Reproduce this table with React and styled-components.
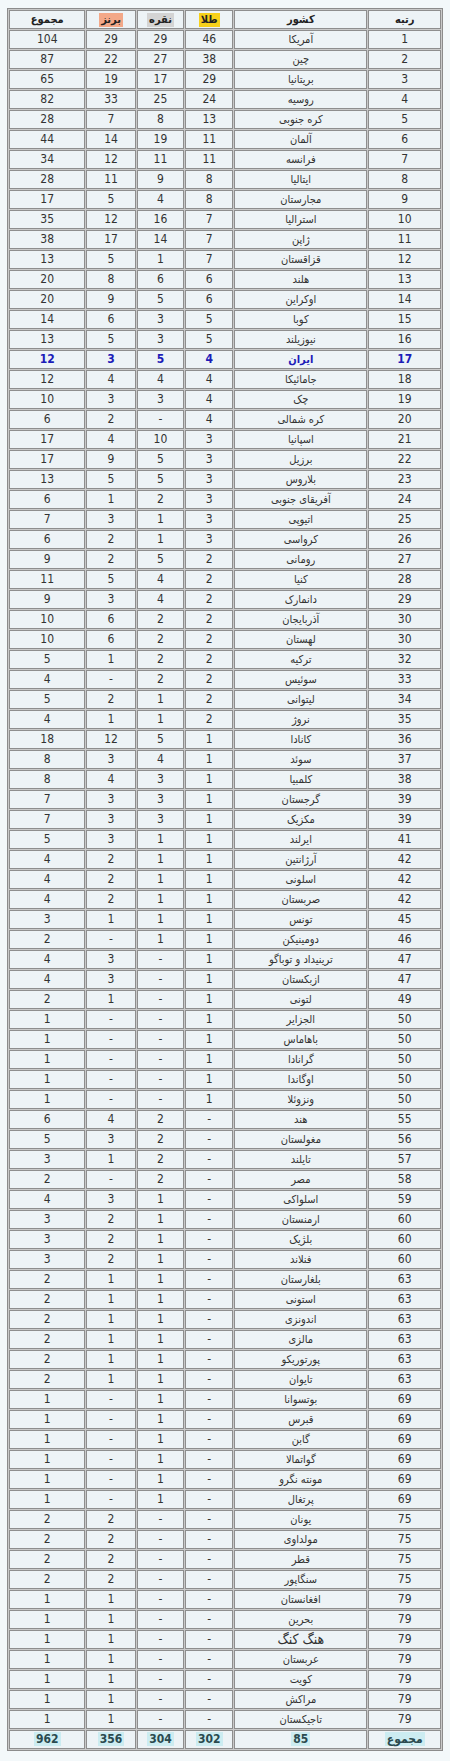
import React from 'react';
import styled, { createGlobalStyle } from 'styled-components';

const GlobalStyle = createGlobalStyle`
  html, body {
    margin: 0;
    padding: 0;
    background: #f3f8fa;
  }
  body {
    font-family: 'DejaVu Sans Condensed', 'DejaVu Sans', sans-serif;
  }
`;

const Page = styled.div`
  width: 450px;
  padding: 8px 7px 10px 7px;
  box-sizing: border-box;
`;

const Table = styled.table`
  direction: rtl;
  width: 436px;
  table-layout: fixed;
  border-collapse: separate;
  border-spacing: 1px;
  border: 1px solid #8c8c8c;
  background: #c9c9c9;
`;

const Cell = styled.td`
  box-sizing: border-box;
  height: 19px;
  padding: 0;
  border: 1px solid #8e8e8e;
  background: #edf3f6;
  text-align: center;
  vertical-align: middle;
  line-height: 17px;
  font-size: ${(props) => (props.large ? '14px' : props.name ? '11px' : '12px')};
  font-weight: ${(props) => (props.bold ? 'bold' : 'normal')};
  color: ${(props) => props.color || '#333333'};
  white-space: nowrap;
  overflow: hidden;
`;

const HeadCell = styled(Cell).attrs({ as: 'th' })`
  font-size: 11px;
  font-weight: bold;
  color: #222222;
`;

const Mark = styled.span`
  display: inline-block;
  padding: 0 2px;
  line-height: 14px;
  background: ${(props) => props.bg};
`;

const medals = [
  [1, 'آمریکا', 46, 29, 29, 104],
  [2, 'چین', 38, 27, 22, 87],
  [3, 'بریتانیا', 29, 17, 19, 65],
  [4, 'روسیه', 24, 25, 33, 82],
  [5, 'کره جنوبی', 13, 8, 7, 28],
  [6, 'آلمان', 11, 19, 14, 44],
  [7, 'فرانسه', 11, 11, 12, 34],
  [8, 'ایتالیا', 8, 9, 11, 28],
  [9, 'مجارستان', 8, 4, 5, 17],
  [10, 'استرالیا', 7, 16, 12, 35],
  [11, 'ژاپن', 7, 14, 17, 38],
  [12, 'قزاقستان', 7, 1, 5, 13],
  [13, 'هلند', 6, 6, 8, 20],
  [14, 'اوکراین', 6, 5, 9, 20],
  [15, 'کوبا', 5, 3, 6, 14],
  [16, 'نیوزیلند', 5, 3, 5, 13],
  [17, 'ایران', 4, 5, 3, 12],
  [18, 'جامائیکا', 4, 4, 4, 12],
  [19, 'چک', 4, 3, 3, 10],
  [20, 'کره شمالی', 4, '-', 2, 6],
  [21, 'اسپانیا', 3, 10, 4, 17],
  [22, 'برزیل', 3, 5, 9, 17],
  [23, 'بلاروس', 3, 5, 5, 13],
  [24, 'آفریقای جنوبی', 3, 2, 1, 6],
  [25, 'اتیوپی', 3, 1, 3, 7],
  [26, 'کرواسی', 3, 1, 2, 6],
  [27, 'رومانی', 2, 5, 2, 9],
  [28, 'کنیا', 2, 4, 5, 11],
  [29, 'دانمارک', 2, 4, 3, 9],
  [30, 'آذربایجان', 2, 2, 6, 10],
  [30, 'لهستان', 2, 2, 6, 10],
  [32, 'ترکیه', 2, 2, 1, 5],
  [33, 'سوئیس', 2, 2, '-', 4],
  [34, 'لیتوانی', 2, 1, 2, 5],
  [35, 'نروژ', 2, 1, 1, 4],
  [36, 'کانادا', 1, 5, 12, 18],
  [37, 'سوئد', 1, 4, 3, 8],
  [38, 'کلمبیا', 1, 3, 4, 8],
  [39, 'گرجستان', 1, 3, 3, 7],
  [39, 'مکزیک', 1, 3, 3, 7],
  [41, 'ایرلند', 1, 1, 3, 5],
  [42, 'آرژانتین', 1, 1, 2, 4],
  [42, 'اسلونی', 1, 1, 2, 4],
  [42, 'صربستان', 1, 1, 2, 4],
  [45, 'تونس', 1, 1, 1, 3],
  [46, 'دومینیکن', 1, 1, '-', 2],
  [47, 'ترینیداد و توباگو', 1, '-', 3, 4],
  [47, 'ازبکستان', 1, '-', 3, 4],
  [49, 'لتونی', 1, '-', 1, 2],
  [50, 'الجزایر', 1, '-', '-', 1],
  [50, 'باهاماس', 1, '-', '-', 1],
  [50, 'گرانادا', 1, '-', '-', 1],
  [50, 'اوگاندا', 1, '-', '-', 1],
  [50, 'ونزوئلا', 1, '-', '-', 1],
  [55, 'هند', '-', 2, 4, 6],
  [56, 'مغولستان', '-', 2, 3, 5],
  [57, 'تایلند', '-', 2, 1, 3],
  [58, 'مصر', '-', 2, '-', 2],
  [59, 'اسلواکی', '-', 1, 3, 4],
  [60, 'ارمنستان', '-', 1, 2, 3],
  [60, 'بلژیک', '-', 1, 2, 3],
  [60, 'فنلاند', '-', 1, 2, 3],
  [63, 'بلغارستان', '-', 1, 1, 2],
  [63, 'استونی', '-', 1, 1, 2],
  [63, 'اندونزی', '-', 1, 1, 2],
  [63, 'مالزی', '-', 1, 1, 2],
  [63, 'پورتوریکو', '-', 1, 1, 2],
  [63, 'تایوان', '-', 1, 1, 2],
  [69, 'بوتسوانا', '-', 1, '-', 1],
  [69, 'قبرس', '-', 1, '-', 1],
  [69, 'گابن', '-', 1, '-', 1],
  [69, 'گواتمالا', '-', 1, '-', 1],
  [69, 'مونته نگرو', '-', 1, '-', 1],
  [69, 'پرتغال', '-', 1, '-', 1],
  [75, 'یونان', '-', '-', 2, 2],
  [75, 'مولداوی', '-', '-', 2, 2],
  [75, 'قطر', '-', '-', 2, 2],
  [75, 'سنگاپور', '-', '-', 2, 2],
  [79, 'افغانستان', '-', '-', 1, 1],
  [79, 'بحرین', '-', '-', 1, 1],
  [79, 'هنگ کنگ', '-', '-', 1, 1],
  [79, 'عربستان', '-', '-', 1, 1],
  [79, 'کویت', '-', '-', 1, 1],
  [79, 'مراکش', '-', '-', 1, 1],
  [79, 'تاجیکستان', '-', '-', 1, 1],
];

const totals = ['مجموع', 85, 302, 304, 356, 962];

const App = () => {
  return (
    <React.Fragment>
      <GlobalStyle />
      <Page>
        <Table>
          <colgroup>
            <col style={{ width: '17%' }} />
            <col style={{ width: '31.2%' }} />
            <col style={{ width: '11.2%' }} />
            <col style={{ width: '11.2%' }} />
            <col style={{ width: '11.5%' }} />
            <col style={{ width: '17.9%' }} />
          </colgroup>
          <thead>
            <tr>
              <HeadCell>رتبه</HeadCell>
              <HeadCell>کشور</HeadCell>
              <HeadCell>
                <Mark bg="#f7d11a">طلا</Mark>
              </HeadCell>
              <HeadCell>
                <Mark bg="#d4d4d4">نقره</Mark>
              </HeadCell>
              <HeadCell>
                <Mark bg="#f3a888">برنز</Mark>
              </HeadCell>
              <HeadCell>مجموع</HeadCell>
            </tr>
          </thead>
          <tbody>
            {medals.map((v, i) => {
              const iran = v[1] === 'ایران';
              const color = iran ? '#1c1cb8' : undefined;
              return (
                <tr key={i}>
                  <Cell bold={iran} color={color}>{v[0]}</Cell>
                  <Cell name bold={iran} color={color} large={v[1] === 'هنگ کنگ'}>
                    {v[1]}
                  </Cell>
                  <Cell bold={iran} color={color}>{v[2]}</Cell>
                  <Cell bold={iran} color={color}>{v[3]}</Cell>
                  <Cell bold={iran} color={color}>{v[4]}</Cell>
                  <Cell bold={iran} color={color}>{v[5]}</Cell>
                </tr>
              );
            })}
            <tr>
              {totals.map((t, i) => (
                <Cell key={i} bold color="#2a4a4f">
                  <Mark bg="#ccecf1">{t}</Mark>
                </Cell>
              ))}
            </tr>
          </tbody>
        </Table>
      </Page>
    </React.Fragment>
  );
};

export default App;
